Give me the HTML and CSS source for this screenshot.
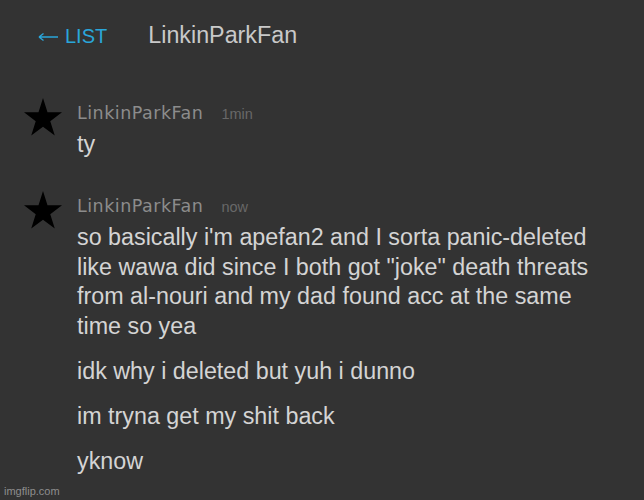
FILE: index.html
```html
<!DOCTYPE html>
<html>
<head>
<meta charset="utf-8">
<link rel="stylesheet" href="styles.css">
</head>
<body>
<header class="topbar">
  <a class="back"><svg class="arrow" viewBox="0 0 20 10"><path d="M1 5H20M1 5L5.5 1.5M1 5L5.5 8.5"/></svg>LIST</a>
  <span class="title">LinkinParkFan</span>
</header>
<main class="thread">
  <div class="msg">
    <svg class="star" viewBox="0 0 38 36.2" preserveAspectRatio="none"><polygon points="19,0 23.49,13.82 38,13.82 26.27,22.36 30.76,36.18 19,27.64 7.24,36.18 11.73,22.36 0,13.82 14.51,13.82"/></svg>
    <div class="body">
      <div class="meta"><span class="user">LinkinParkFan</span><span class="time">1min</span></div>
      <p class="text">ty</p>
    </div>
  </div>
  <div class="msg">
    <svg class="star" viewBox="0 0 38 36.2" preserveAspectRatio="none"><polygon points="19,0 23.49,13.82 38,13.82 26.27,22.36 30.76,36.18 19,27.64 7.24,36.18 11.73,22.36 0,13.82 14.51,13.82"/></svg>
    <div class="body">
      <div class="meta"><span class="user">LinkinParkFan</span><span class="time">now</span></div>
      <p class="text">so basically i'm apefan2 and I sorta panic-deleted<br>like wawa did since I both got "joke" death threats<br>from al-nouri and my dad found acc at the same<br>time so yea</p>
      <p class="text">idk why i deleted but yuh i dunno</p>
      <p class="text">im tryna get my shit back</p>
      <p class="text">yknow</p>
    </div>
  </div>
</main>
<div class="watermark">imgflip.com</div>
</body>
</html>
```
FILE: styles.css
```css
html, body {
  margin: 0;
  padding: 0;
  background: #333333;
  height: 100%;
  overflow: hidden;
}
body {
  font-family: "Liberation Sans", Arial, sans-serif;
  position: relative;
  width: 644px;
  height: 500px;
}
.topbar {
  display: flex;
  align-items: baseline;
  padding: 20px 0 0 38px;
  line-height: 30px;
  height: 30px;
}
.back {
  display: flex;
  align-items: baseline;
  font-size: 20px;
  color: #2aa6da;
  margin-right: 41px;
}
.arrow {
  width: 20px;
  height: 10px;
  margin-right: 7px;
  fill: none;
  stroke: #2aa6da;
  stroke-width: 1.4;
  align-self: center;
  position: relative;
  top: 1px;
}
.title {
  font-size: 23.3px;
  color: #c9c9c9;
}
.thread {
  margin-top: 48px;
  padding-left: 24px;
}
.msg {
  display: flex;
  align-items: flex-start;
}
.msg + .msg {
  margin-top: 31.5px;
}
.star {
  width: 38px;
  height: 37.5px;
  flex: none;
  fill: #000;
  margin-right: 15px;
}
.body {
  padding-top: 5px;
}
.meta {
  display: flex;
  align-items: baseline;
  line-height: 20px;
  height: 20px;
}
.user {
  font-family: "DejaVu Sans", Verdana, sans-serif;
  font-size: 17.5px;
  letter-spacing: 0.5px;
  color: #8c8c8c;
  margin-right: 18px;
}
.time {
  font-size: 14.5px;
  color: #686868;
}
.text {
  margin: 7px 0 0;
  font-size: 23.3px;
  line-height: 29.6px;
  color: #d4d4d4;
}
.text + .text {
  margin-top: 15.5px;
}
.watermark {
  position: absolute;
  left: 4px;
  bottom: 3px;
  font-size: 11px;
  color: #8e8e8e;
}
```
